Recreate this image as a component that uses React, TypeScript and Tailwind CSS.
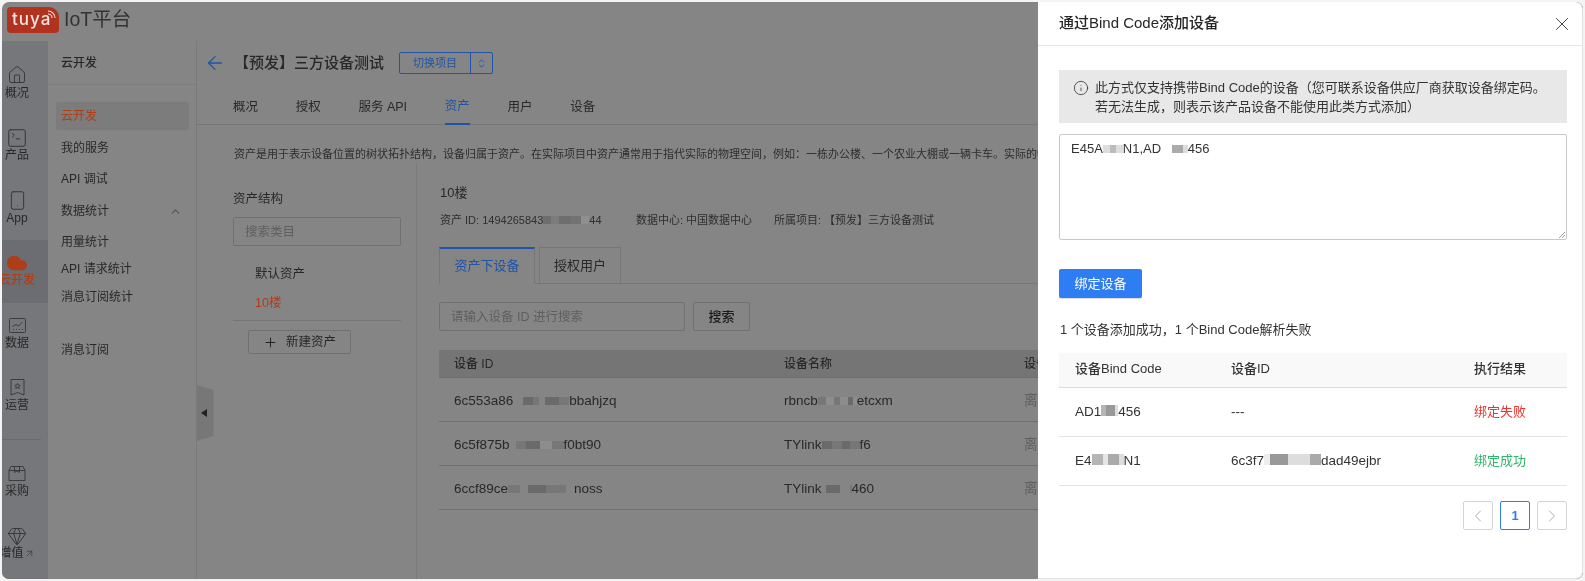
import { ArrowLeft, ArrowUpRight, ChevronLeft, ChevronRight, ChevronUp, ChevronsUpDown, Cloud, Gem, House, Info, Plus, Smartphone, SquareTerminal, X } from 'lucide-react'

type Cell = [number, string]

// mosaic that hides part of an id in the screenshot
function Mask({ cells, h = 8, up = 3 }: { cells: Cell[]; h?: number; up?: number }) {
  return (
    <span className="inline-flex align-baseline" style={{ height: h, marginBottom: up }}>
      {cells.map((c, i) => (
        <span key={i} style={{ width: c[0], height: h, background: c[1] }} />
      ))}
    </span>
  )
}

function ChartIcon() {
  return (
    <svg width="17" height="15" viewBox="0 0 17 15" fill="none" stroke="#2e2e2e" strokeWidth="0.8">
      <rect x="0.5" y="0.5" width="16" height="14" rx="1" />
      <path d="M3.5 8.5 7 6.5l2.5 1.5L13.5 4" />
      <path d="M4 11.5h1M7 11.5h1M10 11.5h1M13 11.5h1" />
    </svg>
  )
}

function BookmarkIcon() {
  return (
    <svg width="15" height="17" viewBox="0 0 15 17" fill="none" stroke="#2e2e2e" strokeWidth="0.8">
      <path d="M1 .5h13v15.500l-6.500-2.500L1 16z" />
      <path d="m7.500 4.500.8 1.700 1.800.2-1.300 1.200.4 1.800-1.700-.9-1.700.9.4-1.800-1.300-1.200 1.800-.2z" />
    </svg>
  )
}

function BoxIcon() {
  return (
    <svg width="18" height="15" viewBox="0 0 18 15" fill="none" stroke="#2e2e2e" strokeWidth="0.8">
      <path d="M1 4.500 3 .5h12l2 4V14.500H1z" />
      <path d="M1 4.500h16M6.500.5v6l2.500-1.500 2.500 1.500v-6" />
    </svg>
  )
}

const railTop = [
  { label: '概况', icon: <House size={20} strokeWidth={1} color="#2e2e2e" /> },
  { label: '产品', icon: <SquareTerminal size={22} strokeWidth={1} color="#2e2e2e" /> },
  { label: 'App', icon: <Smartphone size={21} strokeWidth={1} color="#2e2e2e" /> },
  { label: '云开发', icon: <Cloud size={22} fill="#ad3e18" color="#ad3e18" />, active: true },
  { label: '数据', icon: <ChartIcon /> },
  { label: '运营', icon: <BookmarkIcon /> },
]

const subMenu = [
  { label: '云开发', cls: 'mt-[17px] bg-[#7c7c7c] text-[#ad3e18]' },
  { label: '我的服务', cls: 'mt-[4px]' },
  { label: 'API 调试', cls: 'mt-[3px]' },
  { label: '数据统计', cls: 'mt-[4px]', chevron: true },
  { label: '用量统计', cls: 'mt-[3px]' },
  { label: 'API 请求统计', cls: '-mt-[1px]' },
  { label: '消息订阅统计', cls: 'mt-0' },
  { label: '消息订阅', cls: 'mt-[25px]' },
]

const mainTabs = ['概况', '授权', '服务 API', '资产', '用户', '设备']

const D = '#6a6a6a'
const M = '#777777'
const L = '#8d8d8d'
const B = '#858585'

const devices: { id: [string, Cell[], string]; name: [string, Cell[], string] }[] = [
  {
    id: ['6c553a86', [[10, B], [10, D], [6, M], [6, B], [14, D], [10, M]], 'bbahjzq'],
    name: ['rbncb', [[8, M], [8, L], [6, M], [8, L], [5, D], [4, L]], 'etcxm'],
  },
  {
    id: ['6c5f875b', [[6, B], [10, M], [14, D], [12, L], [12, M]], 'f0bt90'],
    name: ['TYlink', [[10, D], [10, M], [8, D], [10, M]], 'f6'],
  },
  {
    id: ['6ccf89ce', [[12, M], [8, B], [18, D], [8, M], [12, M], [8, B]], 'noss'],
    name: ['TYlink', [[4, B], [14, D], [10, B], [2, M]], '460'],
  },
]

const results = [
  {
    code: ['AD1', [[5, '#b5b5b5'], [9, '#999'], [3, '#ddd']], '456'] as [string, Cell[], string],
    id: null,
    text: '绑定失败',
    color: 'text-[#f0322d]',
  },
  {
    code: ['E4', [[11, '#b5b5b5'], [5, '#e5e5e5'], [11, '#aaa'], [5, '#ddd']], 'N1'] as [string, Cell[], string],
    id: ['6c3f7', [[6, '#eee'], [18, '#999'], [22, '#ddd'], [11, '#aaa']], 'dad49ejbr'] as [string, Cell[], string],
    text: '绑定成功',
    color: 'text-[#2fb56a]',
  },
]

export default function App() {
  return (
    <div className="w-[1585px] h-[581px] bg-[#f4f4f4] p-[2px] font-['Liberation_Sans','Noto_Sans_CJK_SC',sans-serif] text-[#282828] overflow-hidden blur-[0.3px]">
      <div className="relative w-[1581px] h-[577px] rounded-[7px] overflow-hidden bg-[#858585] flex flex-col">
        <header className="h-[39px] shrink-0 flex items-center pl-[5px] pb-[4px]">
          <div className="relative w-[52px] h-[26px] bg-[#b0321f] rounded-l-[4px] rounded-br-[4px] rounded-tr-[10px] flex items-center pl-[5px]">
            <span className="font-['Inter',sans-serif] font-medium text-[17px] leading-none text-[#f3e4df] tracking-[1px]">tuya</span>
            <svg className="absolute right-[3px] top-[3px]" width="9" height="9" viewBox="0 0 9 9" fill="none" stroke="#f3e4df" strokeWidth="1.100">
              <path d="M1 4a4 4 0 0 1 4 4M1 1a7 7 0 0 1 7 7" />
            </svg>
          </div>
          <span className="ml-[5px] text-[19.500px] leading-none text-[#333]">IoT平台</span>
        </header>

        <div className="flex flex-1 min-h-0">
          <nav className="w-[46px] shrink-0 bg-[#76777b] pt-[11.500px] overflow-hidden">
            {railTop.map((item) => (
              <div key={item.label} className={`h-[62.500px] flex items-center ${item.active ? 'bg-[#6c6d72]' : ''}`}>
                <div className={`w-[30px] flex flex-col items-center whitespace-nowrap text-[12px] leading-[17px] ${item.active ? 'text-[#ad3e18] font-medium' : ''}`}>
                  <span className="h-[19px] flex items-center">{item.icon}</span>
                  <span>{item.label}</span>
                </div>
              </div>
            ))}
            <div className="my-[11px] w-[39px] h-px bg-[#6a6b6f]" />
            <div className="h-[62.500px] flex items-center">
              <div className="w-[30px] flex flex-col items-center text-[12px] leading-[17px]">
                <span className="h-[19px] flex items-center"><BoxIcon /></span>
                <span>采购</span>
              </div>
            </div>
            <div className="h-[62.500px] flex items-center">
              <div className="w-[30px] flex flex-col items-center whitespace-nowrap text-[12px] leading-[17px]">
                <span className="h-[19px] flex items-center"><Gem size={20} strokeWidth={1} color="#2e2e2e" /></span>
                <span className="flex items-center">增值<ArrowUpRight size={11} strokeWidth={1.200} /></span>
              </div>
            </div>
          </nav>

          <aside className="w-[149px] shrink-0 border-r border-[#7a7a7a] text-[12px]">
            <div className="h-[44px] flex items-center pl-[13px] border-b border-[#7d7d7d] font-medium">云开发</div>
            <div className="pl-[8px] pr-[7px]">
              {subMenu.map((m) => (
                <div key={m.label} className={`h-[28px] rounded-[2px] px-[5px] flex items-center justify-between ${m.cls}`}>
                  <span>{m.label}</span>
                  {m.chevron && <ChevronUp size={13} color="#555" className="mr-[2px]" />}
                </div>
              ))}
            </div>
          </aside>

          <main className="relative flex-1 min-w-0 flex flex-col">
            <div className="h-[44px] shrink-0 flex items-center pl-[7px]">
              <ArrowLeft size={22} strokeWidth={1.400} color="#1f54a6" />
              <h1 className="ml-[8px] text-[15px] font-medium whitespace-nowrap">【预发】三方设备测试</h1>
              <div className="ml-[15px] h-[22px] flex border border-[#1f54a6] rounded-[2px] text-[#1f54a6] text-[11px]">
                <span className="w-[71px] flex items-center justify-center border-r border-[#1f54a6]">切换项目</span>
                <span className="w-[21px] flex items-center justify-center"><ChevronsUpDown size={11} /></span>
              </div>
            </div>

            <div className="h-[40px] shrink-0 flex gap-[37.700px] pl-[36px] border-b border-[#767676] text-[12.500px]">
              {mainTabs.map((t) => (
                <div key={t} className={`flex items-center h-[40px] pt-[4px] whitespace-nowrap ${t === '资产' ? 'text-[#1f54a6] border-b-2 border-[#1f54a6]' : ''}`}>{t}</div>
              ))}
            </div>

            <p className="h-[38px] shrink-0 pt-[21px] pl-[37px] text-[11px] leading-[16px] whitespace-nowrap text-[#2e2e2e]">
              资产是用于表示设备位置的树状拓扑结构，设备归属于资产。在实际项目中资产通常用于指代实际的物理空间，例如：一栋办公楼、一个农业大棚或一辆卡车。实际的物理空间可以按层级划分
            </p>

            <div className="flex flex-1 min-h-0">
              <section className="w-[200px] shrink-0 pl-[36px]">
                <h2 className="mt-[26px] text-[12.500px] leading-[20px]">资产结构</h2>
                <input
                  readOnly
                  placeholder="搜索类目"
                  className="mt-[8px] w-[168px] h-[29px] px-[11px] border border-[#707070] rounded-[2px] text-[12.500px] outline-none placeholder:text-[#5f5f5f]"
                />
                <div className="mt-[18px] pl-[22px] text-[12.500px] leading-[20px]">默认资产</div>
                <div className="mt-[9px] pl-[22px] text-[12.500px] leading-[20px] text-[#ad3e18]">10楼</div>
                <div className="mt-[7px] w-[168px] h-px bg-[#767676]" />
                <button className="mt-[9px] ml-[15px] w-[103px] h-[24px] flex items-center justify-center gap-[8px] border border-[#707070] rounded-[2px] text-[12.500px]">
                  <Plus size={15} strokeWidth={1.500} color="#1c1c1c" />
                  新建资产
                </button>
              </section>

              <section className="ml-[19px] flex-1 min-w-0 border-l border-[#7b7b7b] pl-[23px] overflow-hidden">
                <div className="mt-[20px] text-[13px] leading-[20px]">10楼</div>
                <div className="mt-[10px] text-[11px] leading-[14px] whitespace-nowrap flex text-[#2e2e2e]">
                  <span className="w-[196px]">资产 ID: 1494265843<Mask h={8} up={2} cells={[[8, '#6e6e6e'], [8, '#7c7c7c'], [12, '#6e6e6e'], [10, '#737373'], [8, '#8f8f8f']]} />44</span>
                  <span className="w-[138px]">数据中心: 中国数据中心</span>
                  <span>所属项目: 【预发】三方设备测试</span>
                </div>
                <div className="mt-[20px] h-[37px] flex border-b border-[#767676] text-[13px] -ml-px">
                  <div className="w-[96px] h-[37px] border border-[#767676] border-b-[#858585] border-t-2 border-t-[#1f54a6] text-[#1f54a6] flex items-center justify-center">资产下设备</div>
                  <div className="ml-[4px] w-[82px] h-[37px] border border-[#767676] flex items-center justify-center">授权用户</div>
                </div>
                <div className="mt-[18px] flex gap-[8px] -ml-px">
                  <input
                    readOnly
                    placeholder="请输入设备 ID 进行搜索"
                    className="w-[246px] h-[29px] px-[11px] border border-[#707070] rounded-[2px] text-[12.500px] outline-none placeholder:text-[#5f5f5f]"
                  />
                  <button className="w-[57px] h-[29px] border border-[#707070] rounded-[2px] text-[13px] font-medium text-[#1c1c1c]">搜索</button>
                </div>
                <div className="mt-[19px] -ml-px w-[700px] text-[13.500px]">
                  <div className="h-[28px] bg-[#757575] border-b border-[#6c6c6c] grid grid-cols-[345px_240px_1fr] items-center pl-[15px] text-[12px] font-medium">
                    <span>设备 ID</span>
                    <span className="-ml-[15px]">设备名称</span>
                    <span className="-ml-[15px]">设备状态</span>
                  </div>
                  {devices.map((d) => (
                    <div key={d.id[0]} className="h-[44px] pt-[3px] border-b border-[#6f6f6f] grid grid-cols-[345px_240px_1fr] items-center pl-[15px] whitespace-nowrap">
                      <span>{d.id[0]}<Mask cells={d.id[1]} />{d.id[2]}</span>
                      <span className="-ml-[15px]">{d.name[0]}<Mask cells={d.name[1]} />{d.name[2]}</span>
                      <span className="-ml-[15px] text-[#5f5f5f]">离线</span>
                    </div>
                  ))}
                </div>
              </section>
            </div>

            <svg className="absolute left-0 top-[344px]" width="17" height="56" viewBox="0 0 17 56">
              <path d="M0 0 16.500 5V51L0 56z" fill="#777" />
              <path d="M10 24v8l-6-4z" fill="#222" />
            </svg>
          </main>
        </div>

        <div className="absolute right-0 top-0 bottom-0 w-[545px] bg-white flex flex-col text-[#333] rounded-r-[7px] border-r border-b border-[#e2e2e2]">
          <div className="h-[44px] shrink-0 border-b border-[#e5e5e5] flex items-center justify-between pl-[21px] pr-[9px]">
            <h2 className="text-[15px] font-medium text-[#262626]">通过Bind Code添加设备</h2>
            <X size={22} strokeWidth={1} color="#333" />
          </div>
          <div className="flex-1 pl-[21px] pr-[15px] pt-[24px]">
            <div className="h-[53px] bg-[#e8e8e8] flex pl-[14px] pt-[8px] text-[13px] leading-[19px]">
              <Info size={16} strokeWidth={1.200} className="mt-[2px] shrink-0" />
              <p className="ml-[6px] whitespace-nowrap">此方式仅支持携带Bind Code的设备（您可联系设备供应厂商获取设备绑定码。<br />若无法生成，则表示该产品设备不能使用此类方式添加）</p>
            </div>
            <div className="relative mt-[11px] h-[106px] border border-[#c9c9c9] rounded-[2px] px-[11px] py-[5px] text-[13px] leading-[18px]">
              E45A<Mask cells={[[7, '#ddd'], [6, '#bbb'], [7, '#ddd']]} />N1,AD <Mask cells={[[7, '#fff'], [11, '#aaa'], [5, '#ddd']]} />456
              <svg className="absolute right-[1px] bottom-[1px]" width="7" height="7" viewBox="0 0 7 7" stroke="#777" strokeWidth="0.700">
                <path d="M1 7 7 1M4 7l3-3" />
              </svg>
            </div>
            <button className="mt-[29px] w-[83px] h-[29px] bg-[#2f7df2] rounded-[2px] text-white text-[13px] shadow-[0_1px_1px_rgba(0,0,0,0.15)]">绑定设备</button>
            <p className="mt-[23px] pl-[1px] text-[13px] leading-[18px]">1 个设备添加成功，1 个Bind Code解析失败</p>
            <div className="mt-[14px] text-[13.500px]">
              <div className="h-[35px] bg-[#f9f9f9] border-b border-[#dcdcdc] grid grid-cols-[156px_243px_1fr] items-center pl-[16px] pb-[2px] text-[13px] font-medium text-[#333]">
                <span>设备Bind Code</span>
                <span>设备ID</span>
                <span>执行结果</span>
              </div>
              {results.map((r) => (
                <div key={r.text} className="h-[49px] border-b border-[#e3e3e3] grid grid-cols-[156px_243px_1fr] items-center pl-[16px] whitespace-nowrap">
                  <span>{r.code[0]}<Mask cells={r.code[1]} h={11} up={1} />{r.code[2]}</span>
                  <span>{r.id ? <>{r.id[0]}<Mask cells={r.id[1]} h={11} up={1} />{r.id[2]}</> : '---'}</span>
                  <span className={`${r.color} text-[13px]`}>{r.text}</span>
                </div>
              ))}
            </div>
            <div className="mt-[15px] flex justify-end gap-[7px]">
              <div className="w-[30px] h-[29px] border border-[#d4d4d4] rounded-[2px] flex items-center justify-center"><ChevronLeft size={20} strokeWidth={1} color="#999" /></div>
              <div className="w-[30px] h-[29px] border border-[#2f7df2] rounded-[2px] flex items-center justify-center text-[13px] font-bold text-[#2f7df2]">1</div>
              <div className="w-[30px] h-[29px] border border-[#d4d4d4] rounded-[2px] flex items-center justify-center"><ChevronRight size={20} strokeWidth={1} color="#999" /></div>
            </div>
          </div>
        </div>
      </div>
    </div>
  )
}
